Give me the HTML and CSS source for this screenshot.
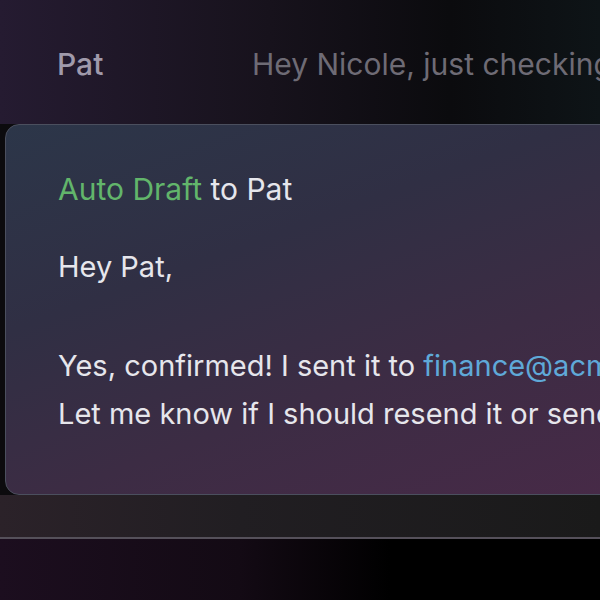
FILE: index.html
```html
<!DOCTYPE html>
<html lang="en">
<head>
  <meta charset="UTF-8">
  <meta name="viewport" content="width=device-width, initial-scale=1.0">
  <title>Auto Draft</title>
  <link rel="stylesheet" href="styles.css">
</head>
<body>
  <div class="thread-row">
    <span class="sender">Pat</span>
    <span class="preview">Hey Nicole, just checking in</span>
  </div>

  <div class="draft-card">
    <p class="draft-title"><span class="tag">Auto Draft</span> to Pat</p>
    <p class="draft-line greeting">Hey Pat,</p>
    <p class="draft-line">Yes, confirmed! I sent it to <span class="email">finance@acme.com</span></p>
    <p class="draft-line">Let me know if I should resend it or send</p>
  </div>

  <div class="footer-band"></div>
  <div class="bottom"></div>
</body>
</html>
```

FILE: styles.css
```css
html, body {
  margin: 0;
  height: 600px;
  overflow: hidden;
}
body {
  background-color: #0c0b0e;
  font-family: Inter, "Noto Sans", sans-serif;
  display: flex;
  flex-direction: column;
}
p {
  margin: 0;
}
.thread-row {
  flex-shrink: 0;
  height: 124px;
  box-sizing: border-box;
  padding: 46px 0 0 57px;
  display: flex;
  white-space: nowrap;
  overflow: hidden;
  background: linear-gradient(90deg, #251b31 0%, #17121c 45%, #0b0b0e 75%, #0e1417 100%);
}
.sender {
  flex-shrink: 0;
  width: 195px;
  font-size: 30px;
  font-weight: 500;
  color: #a09aab;
}
.preview {
  font-size: 30px;
  color: #6e6b75;
}
.draft-card {
  flex-shrink: 0;
  height: 371px;
  box-sizing: border-box;
  margin-left: 5px;
  margin-right: -20px;
  padding: 44px 0 0 52px;
  border: 1px solid #4b4f5e;
  border-radius: 14px;
  background: linear-gradient(160deg, #2c3649 0%, #302f44 35%, #3c2c44 65%, #472a47 100%);
  white-space: nowrap;
  overflow: hidden;
  color: #e6e6ec;
  font-size: 29px;
}
.draft-title {
  font-size: 30px;
  line-height: 40px;
}
.tag {
  color: #62b56b;
}
.greeting {
  margin-top: 34px;
  margin-bottom: 51px;
}
.draft-line {
  line-height: 48px;
}
.email {
  color: #5fa9d8;
}
.footer-band {
  flex-shrink: 0;
  height: 42px;
  border-bottom: 2px solid #55505a;
  background: linear-gradient(90deg, #2b2229 0%, #211e22 40%, #1a1a1a 100%);
}
.bottom {
  flex: 1;
  background: linear-gradient(90deg, #1c0e1f 0%, #130a14 40%, #000 65%, #000 100%);
}
```
